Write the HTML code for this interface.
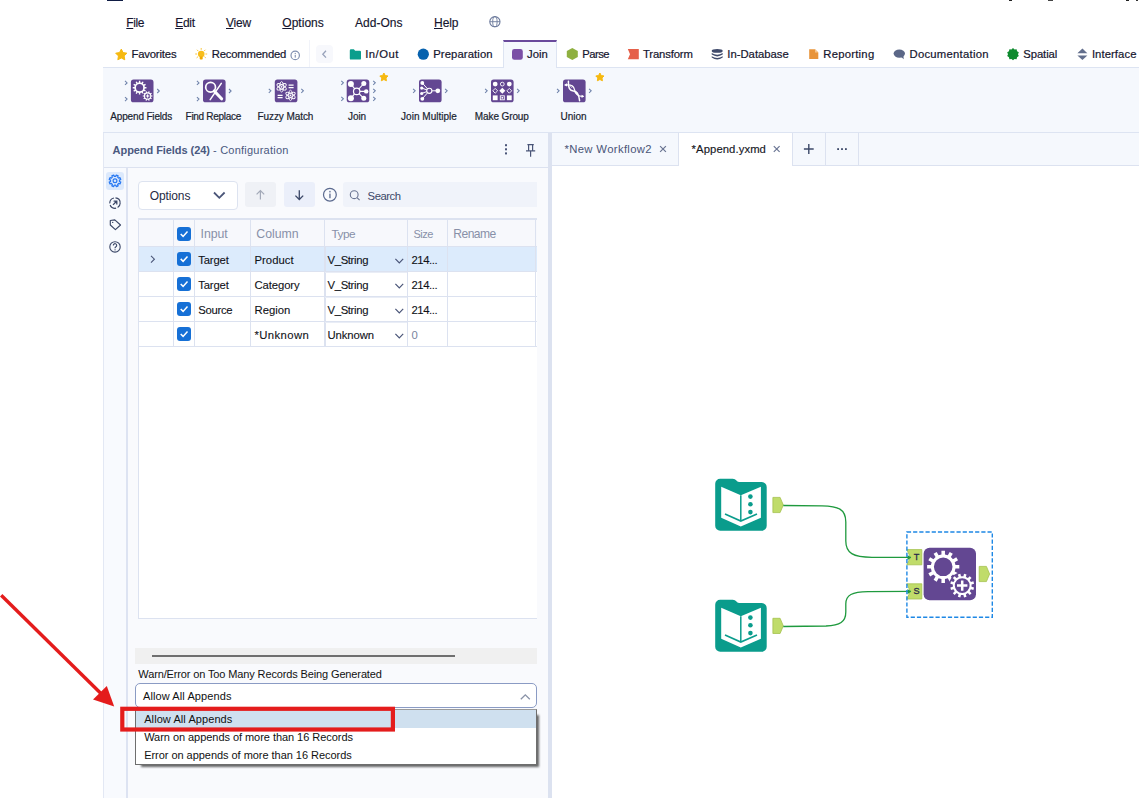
<!DOCTYPE html>
<html><head><meta charset="utf-8"><title>Append Fields</title>
<style>
html,body{margin:0;padding:0;background:#fff;}
body{width:1139px;height:798px;overflow:hidden;position:relative;font-family:"Liberation Sans",sans-serif;color:#1f2a44;}
.abs{position:absolute;}
.t{position:absolute;white-space:nowrap;line-height:1;}
.t u{text-decoration:underline;text-underline-offset:1px;text-decoration-thickness:1px;}
svg{position:absolute;left:0;top:0;overflow:visible;}
</style></head>
<body>
<div class="abs" style="left:107px;top:0;width:16px;height:1px;background:#0f1c44"></div>
<div class="abs" style="left:1009px;top:0;width:3px;height:1px;background:#222"></div>
<div class="abs" style="left:1048px;top:0;width:5px;height:1px;background:#444"></div>
<div class="abs" style="left:1126px;top:0;width:3px;height:1px;background:#222"></div>
<div class="abs" style="left:1136px;top:0;width:2px;height:1px;background:#333"></div>
<div class="t" style="left:126.3px;top:17px;font-size:12px;letter-spacing:-0.365px;color:#15152e;-webkit-text-stroke:0.15px #15152e;"><u>F</u>ile</div><div class="t" style="left:175.2px;top:17px;font-size:12px;letter-spacing:-0.276px;color:#15152e;-webkit-text-stroke:0.15px #15152e;"><u>E</u>dit</div><div class="t" style="left:226px;top:17px;font-size:12px;letter-spacing:-0.228px;color:#15152e;-webkit-text-stroke:0.15px #15152e;"><u>V</u>iew</div><div class="t" style="left:282.3px;top:17px;font-size:12px;letter-spacing:0.018px;color:#15152e;-webkit-text-stroke:0.15px #15152e;"><u>O</u>ptions</div><div class="t" style="left:355px;top:17px;font-size:12px;letter-spacing:0.020px;color:#15152e;-webkit-text-stroke:0.15px #15152e;">Add-Ons</div><div class="t" style="left:434px;top:17px;font-size:12px;letter-spacing:-0.047px;color:#15152e;-webkit-text-stroke:0.15px #15152e;"><u>H</u>elp</div>
<div class="abs" style="left:103px;top:67px;width:1036px;height:1px;background:#dde4f2"></div>
<div class="abs" style="left:103px;top:68px;width:1036px;height:64px;background:#f5f8fd"></div>
<div class="abs" style="left:103px;top:132px;width:1036px;height:1px;background:#dde4f2"></div>
<div class="abs" style="left:503px;top:40px;width:54px;height:28px;background:#f5f8fd;border-top:2px solid #6a4a9c;border-left:1px solid #dde4f2;border-right:1px solid #dde4f2;box-sizing:border-box"></div>
<div class="abs" style="left:309px;top:40px;width:1px;height:27px;background:#f1f3f9"></div>
<div class="abs" style="left:316px;top:45px;width:17px;height:18px;background:#f7f8fc;border-radius:4px"></div>
<div class="t" style="left:131.4px;top:49px;font-size:11.3px;letter-spacing:-0.163px;color:#15152e;-webkit-text-stroke:0.2px #15152e;">Favorites</div><div class="t" style="left:211.8px;top:49px;font-size:11.3px;letter-spacing:-0.210px;color:#15152e;-webkit-text-stroke:0.2px #15152e;">Recommended</div><div class="t" style="left:365.2px;top:49px;font-size:11.3px;letter-spacing:0.486px;color:#15152e;-webkit-text-stroke:0.2px #15152e;">In/Out</div><div class="t" style="left:433.2px;top:49px;font-size:11.3px;letter-spacing:0.099px;color:#15152e;-webkit-text-stroke:0.2px #15152e;">Preparation</div><div class="t" style="left:527px;top:49px;font-size:11.3px;letter-spacing:0.016px;color:#15152e;-webkit-text-stroke:0.2px #15152e;">Join</div><div class="t" style="left:582.3px;top:49px;font-size:11.27px;letter-spacing:-0.550px;color:#15152e;-webkit-text-stroke:0.2px #15152e;">Parse</div><div class="t" style="left:643px;top:49px;font-size:11.3px;letter-spacing:-0.151px;color:#15152e;-webkit-text-stroke:0.2px #15152e;">Transform</div><div class="t" style="left:727.3px;top:49px;font-size:11.3px;letter-spacing:-0.004px;color:#15152e;-webkit-text-stroke:0.2px #15152e;">In-Database</div><div class="t" style="left:823.3px;top:49px;font-size:11.3px;letter-spacing:0.235px;color:#15152e;-webkit-text-stroke:0.2px #15152e;">Reporting</div><div class="t" style="left:909.5px;top:49px;font-size:11.3px;letter-spacing:0.247px;color:#15152e;-webkit-text-stroke:0.2px #15152e;">Documentation</div><div class="t" style="left:1023.2px;top:49px;font-size:11.3px;letter-spacing:-0.064px;color:#15152e;-webkit-text-stroke:0.2px #15152e;">Spatial</div><div class="t" style="left:1091.9px;top:49px;font-size:11.3px;letter-spacing:0.070px;color:#15152e;-webkit-text-stroke:0.2px #15152e;">Interface</div><div class="t" style="left:110.3px;top:112px;font-size:10px;letter-spacing:-0.164px;color:#1a1f30;-webkit-text-stroke:0.2px #1a1f30;">Append Fields</div><div class="t" style="left:185.6px;top:112px;font-size:10px;letter-spacing:-0.293px;color:#1a1f30;-webkit-text-stroke:0.2px #1a1f30;">Find Replace</div><div class="t" style="left:257.5px;top:112px;font-size:10px;letter-spacing:-0.081px;color:#1a1f30;-webkit-text-stroke:0.2px #1a1f30;">Fuzzy Match</div><div class="t" style="left:348.1px;top:112px;font-size:10px;letter-spacing:-0.115px;color:#1a1f30;-webkit-text-stroke:0.2px #1a1f30;">Join</div><div class="t" style="left:401.1px;top:112px;font-size:10px;letter-spacing:0.016px;color:#1a1f30;-webkit-text-stroke:0.2px #1a1f30;">Join Multiple</div><div class="t" style="left:474.8px;top:112px;font-size:10px;letter-spacing:-0.103px;color:#1a1f30;-webkit-text-stroke:0.2px #1a1f30;">Make Group</div><div class="t" style="left:560.4px;top:112px;font-size:10px;letter-spacing:0.032px;color:#1a1f30;-webkit-text-stroke:0.2px #1a1f30;">Union</div><svg width="1139" height="798" viewBox="0 0 1139 798"><g fill="none" stroke="#6c7a9c" stroke-width="1.1"><circle cx="494.9" cy="21.7" r="5.1"/><ellipse cx="494.9" cy="21.7" rx="2.2" ry="5.1" stroke-width="0.9"/><path d="M489.8 21.7h10.2" stroke-width="0.9"/></g>
<path d="M121.30 49.10 L123.06 52.57 L126.91 53.18 L124.15 55.93 L124.77 59.77 L121.30 58.00 L117.83 59.77 L118.45 55.93 L115.69 53.18 L119.54 52.57 Z" fill="#f6b910" stroke="#f6b910" stroke-width="1" stroke-linejoin="round"/>
<g><circle cx="201.2" cy="54" r="3.3" fill="#f7bd1a"/><rect x="199.7" y="56.6" width="3" height="3" rx="0.8" fill="#f0a800"/><g stroke="#f7c53a" stroke-width="1" stroke-linecap="round"><path d="M196.60 54.00 L195.60 54.00"/><path d="M197.95 50.75 L197.24 50.04"/><path d="M201.20 49.40 L201.20 48.40"/><path d="M204.45 50.75 L205.16 50.04"/><path d="M205.80 54.00 L206.80 54.00"/><path d="M197.68 56.96 L196.91 57.60"/><path d="M204.72 56.96 L205.49 57.60"/></g></g>
<g><circle cx="295.2" cy="55.4" r="4.2" fill="none" stroke="#8190b0" stroke-width="1.2"/><rect x="294.7" y="54.8" width="1.1" height="2.8" fill="#8190b0"/><rect x="294.7" y="52.9" width="1.1" height="1.1" fill="#8190b0"/></g>
<path d="M326 50.8 l-3.2 3.4 l3.2 3.4" fill="none" stroke="#98a2ba" stroke-width="1.3"/>
<path d="M349.8 50.4 a1.2 1.2 0 0 1 1.2 -1.2 h2.8 l1.4 1.6 h4.6 a1.2 1.2 0 0 1 1.2 1.2 v6.4 a1.2 1.2 0 0 1 -1.2 1.2 h-8.8 a1.2 1.2 0 0 1 -1.2 -1.2 Z" fill="#0a9e8c"/>
<circle cx="423.3" cy="54.2" r="5.6" fill="#0762ae"/>
<rect x="512" y="49" width="10.8" height="10.8" rx="2.4" fill="#7b4fa6"/>
<path d="M572.3 48.1 L577.8 51.1 V57.1 L572.3 60.1 L566.8 57.1 V51.1 Z" fill="#8fb040"/>
<path d="M627.8 49 H638.8 V59.3 H627.8 L630 54.15 Z" fill="#e5604a"/>
<g fill="#3f4a6b"><ellipse cx="717.2" cy="50.9" rx="5.5" ry="1.9"/><path d="M711.7 53 q5.5 3.4 11 0 v1.6 q-5.5 3.6 -11 0 Z"/><path d="M711.7 56.2 q5.5 3.4 11 0 v1.3 q-5.5 3.8 -11 0 Z"/></g>
<path d="M809.2 49.2 H815 L818.3 52.5 V59 H809.2 Z" fill="#e8943a"/><path d="M815 49.2 V52.5 H818.3 Z" fill="#f6c58d"/>
<g fill="#5b6787"><ellipse cx="899.3" cy="53.6" rx="5.7" ry="4.1"/><path d="M900.5 56.5 L903.8 59.2 L903.2 55 Z"/></g>
<path d="M1013.00 48.10 L1014.55 49.44 L1016.59 49.26 L1017.05 51.26 L1018.80 52.31 L1018.00 54.20 L1018.80 56.09 L1017.05 57.14 L1016.59 59.14 L1014.55 58.96 L1013.00 60.30 L1011.45 58.96 L1009.41 59.14 L1008.95 57.14 L1007.20 56.09 L1008.00 54.20 L1007.20 52.31 L1008.95 51.26 L1009.41 49.26 L1011.45 49.44 Z" fill="#0e8a2e"/>
<g fill="#626e8c"><path d="M1082.4 48.6 L1087.4 53.2 H1077.4 Z"/><path d="M1082.4 60 L1087.4 55.4 H1077.4 Z"/></g>
<rect x="130.9" y="79.6" width="22.6" height="22.7" rx="2.6" fill="#634792"/>
<path fill-rule="evenodd" fill="#fff" d="M144.85 87.01 L146.46 86.98 L146.46 88.42 L144.85 88.39 L144.50 89.73 L145.90 90.51 L145.18 91.76 L143.80 90.93 L142.83 91.90 L143.66 93.28 L142.41 94.00 L141.63 92.60 L140.29 92.95 L140.32 94.56 L138.88 94.56 L138.91 92.95 L137.57 92.60 L136.79 94.00 L135.54 93.28 L136.37 91.90 L135.40 90.93 L134.02 91.76 L133.30 90.51 L134.70 89.73 L134.35 88.39 L132.74 88.42 L132.74 86.98 L134.35 87.01 L134.70 85.67 L133.30 84.89 L134.02 83.64 L135.40 84.47 L136.37 83.50 L135.54 82.12 L136.79 81.40 L137.57 82.80 L138.91 82.45 L138.88 80.84 L140.32 80.84 L140.29 82.45 L141.63 82.80 L142.41 81.40 L143.66 82.12 L142.83 83.50 L143.80 84.47 L145.18 83.64 L145.90 84.89 L144.50 85.67 Z M136.00 87.70 a3.60 3.60 0 1 0 7.20 0 a3.60 3.60 0 1 0 -7.20 0 Z"/>
<circle cx="147.6" cy="96" r="5.6" fill="#634792"/>
<path fill-rule="evenodd" fill="#fff" d="M151.35 95.41 L152.46 95.39 L152.46 96.61 L151.35 96.59 L150.99 97.73 L151.89 98.36 L151.17 99.35 L150.29 98.69 L149.33 99.39 L149.69 100.43 L148.52 100.81 L148.19 99.75 L147.01 99.75 L146.68 100.81 L145.51 100.43 L145.87 99.39 L144.91 98.69 L144.03 99.35 L143.31 98.36 L144.21 97.73 L143.85 96.59 L142.74 96.61 L142.74 95.39 L143.85 95.41 L144.21 94.27 L143.31 93.64 L144.03 92.65 L144.91 93.31 L145.87 92.61 L145.51 91.57 L146.68 91.19 L147.01 92.25 L148.19 92.25 L148.52 91.19 L149.69 91.57 L149.33 92.61 L150.29 93.31 L151.17 92.65 L151.89 93.64 L150.99 94.27 Z M145.00 96.00 a2.60 2.60 0 1 0 5.20 0 a2.60 2.60 0 1 0 -5.20 0 Z"/>
<circle cx="147.6" cy="96" r="1" fill="#fff"/><path d="M147.6 93.9 v4.2 M145.5 96 h4.2" stroke="#fff" stroke-width="0.7"/>
<path d="M125.00 80.90 l2.10 2.00 l-2.10 2.00" fill="none" stroke="#6f83ab" stroke-width="1.05"/><path d="M125.00 97.10 l2.10 2.00 l-2.10 2.00" fill="none" stroke="#6f83ab" stroke-width="1.05"/><path d="M157.20 89.00 l2.10 2.00 l-2.10 2.00" fill="none" stroke="#6f83ab" stroke-width="1.05"/>
<rect x="203.0" y="79.6" width="22.6" height="22.7" rx="2.6" fill="#634792"/>
<circle cx="210.6" cy="87.3" r="4.9" fill="none" stroke="#fff" stroke-width="1.7"/>
<path d="M214.2 91 L221.6 98.8" stroke="#fff" stroke-width="3.1" stroke-linecap="round"/>
<path d="M221.3 83.4 L210.2 99.6" stroke="#fff" stroke-width="1.5" stroke-linecap="round"/>
<path d="M196.90 80.90 l2.10 2.00 l-2.10 2.00" fill="none" stroke="#6f83ab" stroke-width="1.05"/><path d="M196.90 97.10 l2.10 2.00 l-2.10 2.00" fill="none" stroke="#6f83ab" stroke-width="1.05"/><path d="M229.00 89.00 l2.10 2.00 l-2.10 2.00" fill="none" stroke="#6f83ab" stroke-width="1.05"/>
<rect x="274.8" y="79.6" width="22.6" height="22.7" rx="2.6" fill="#634792"/>
<g fill="none" stroke="#fff" stroke-width="0.9"><ellipse cx="281.6" cy="86.8" rx="5.2" ry="2.0" transform="rotate(90 281.6 86.8)"/><ellipse cx="281.6" cy="86.8" rx="5.2" ry="2.0" transform="rotate(30 281.6 86.8)"/><ellipse cx="281.6" cy="86.8" rx="5.2" ry="2.0" transform="rotate(150 281.6 86.8)"/></g><circle cx="281.6" cy="86.8" r="0.9" fill="#fff"/><g fill="none" stroke="#fff" stroke-width="0.9"><ellipse cx="290.5" cy="95.4" rx="5.2" ry="2.0" transform="rotate(90 290.5 95.4)"/><ellipse cx="290.5" cy="95.4" rx="5.2" ry="2.0" transform="rotate(30 290.5 95.4)"/><ellipse cx="290.5" cy="95.4" rx="5.2" ry="2.0" transform="rotate(150 290.5 95.4)"/></g><circle cx="290.5" cy="95.4" r="0.9" fill="#fff"/>
<path d="M288.6 85.2 h5 M288.6 87.6 h5 M277.6 95.3 h5 M277.6 97.7 h5" stroke="#fff" stroke-width="1.2"/>
<path d="M268.80 88.80 l2.10 2.00 l-2.10 2.00" fill="none" stroke="#6f83ab" stroke-width="1.05"/><path d="M301.30 88.80 l2.10 2.00 l-2.10 2.00" fill="none" stroke="#6f83ab" stroke-width="1.05"/>
<rect x="346.7" y="79.6" width="22.6" height="22.7" rx="2.6" fill="#634792"/>
<g fill="none" stroke="#fff" stroke-width="1.1"><path d="M350.8 83.8 L356.7 91.4 L363.8 83.5 M350.8 98.3 L356.7 91.4 L363.8 98.3 M356.7 91.4 H366"/></g>
<circle cx="356.7" cy="91.4" r="3.2" fill="#634792" stroke="#fff" stroke-width="1.2"/>
<g fill="#fff"><circle cx="350.9" cy="83.9" r="3"/><circle cx="363.8" cy="83.6" r="2.5"/><circle cx="350.9" cy="98.2" r="3"/><circle cx="363.8" cy="98.2" r="2.5"/><circle cx="366.2" cy="91.4" r="2.2"/></g>
<path d="M341.30 80.80 l2.10 2.00 l-2.10 2.00" fill="none" stroke="#6f83ab" stroke-width="1.05"/><path d="M341.30 96.80 l2.10 2.00 l-2.10 2.00" fill="none" stroke="#6f83ab" stroke-width="1.05"/><path d="M373.20 80.80 l2.10 2.00 l-2.10 2.00" fill="none" stroke="#6f83ab" stroke-width="1.05"/><path d="M373.20 88.80 l2.10 2.00 l-2.10 2.00" fill="none" stroke="#6f83ab" stroke-width="1.05"/><path d="M373.20 96.80 l2.10 2.00 l-2.10 2.00" fill="none" stroke="#6f83ab" stroke-width="1.05"/>
<path d="M383.90 73.00 L385.19 75.52 L387.99 75.97 L385.99 77.98 L386.43 80.78 L383.90 79.50 L381.37 80.78 L381.81 77.98 L379.81 75.97 L382.61 75.52 Z" fill="#f6b910" stroke="#f6b910" stroke-width="1" stroke-linejoin="round"/>
<rect x="419.0" y="79.6" width="22.6" height="22.7" rx="2.6" fill="#634792"/>
<g fill="none" stroke="#fff" stroke-width="1"><path d="M422.2 82.9 L429.3 90.8 M421.6 88 L429.3 90.8 M421.6 93.4 L429.3 90.8 M422.2 98.9 L429.3 90.8 H437.5"/></g>
<circle cx="429.3" cy="90.8" r="2.6" fill="#634792" stroke="#fff" stroke-width="1.1"/>
<g fill="#fff"><circle cx="437.8" cy="90.8" r="2.4"/><circle cx="422.3" cy="83" r="1.9"/><circle cx="421.7" cy="88.1" r="1.6"/><circle cx="421.7" cy="93.5" r="1.6"/><circle cx="422.3" cy="98.8" r="1.9"/></g>
<path d="M413.10 88.80 l2.10 2.00 l-2.10 2.00" fill="none" stroke="#6f83ab" stroke-width="1.05"/><path d="M445.10 88.80 l2.10 2.00 l-2.10 2.00" fill="none" stroke="#6f83ab" stroke-width="1.05"/>
<rect x="491.0" y="79.6" width="22.6" height="22.7" rx="2.6" fill="#634792"/>
<circle cx="495.2" cy="84.1" r="2.4" fill="#fff"/><circle cx="502.3" cy="84.1" r="1.9" fill="none" stroke="#fff" stroke-width="0.9"/><circle cx="509.3" cy="84.1" r="2.4" fill="#fff"/><path d="M495.2 88.4 l2.4 2.4 l-2.4 2.4 l-2.4 -2.4 Z" fill="none" stroke="#fff" stroke-width="0.9"/><path d="M502.3 87.8 l3.0 3.0 l-3.0 3.0 l-3.0 -3.0 Z" fill="#fff"/><path d="M509.3 88.4 l2.4 2.4 l-2.4 2.4 l-2.4 -2.4 Z" fill="none" stroke="#fff" stroke-width="0.9"/><rect x="492.8" y="95.4" width="4.8" height="4.8" fill="#fff"/><rect x="500.3" y="95.8" width="4" height="4" fill="none" stroke="#fff" stroke-width="0.9"/><rect x="501.5" y="97.0" width="1.6" height="1.6" fill="#fff"/><rect x="506.9" y="95.4" width="4.8" height="4.8" fill="#fff"/>
<path d="M485.10 88.80 l2.10 2.00 l-2.10 2.00" fill="none" stroke="#6f83ab" stroke-width="1.05"/><path d="M517.10 88.80 l2.10 2.00 l-2.10 2.00" fill="none" stroke="#6f83ab" stroke-width="1.05"/>
<rect x="563.0" y="79.6" width="22.6" height="22.7" rx="2.6" fill="#634792"/>
<g fill="none" stroke="#fff" stroke-linecap="round"><path d="M568.4 81.3 C568.1 86 568.4 90.6 573.4 91.1 C577.6 91.5 579 95 579.6 100.7" stroke-width="1.5"/><path d="M565.2 85 C569.5 84.4 573.6 84.6 574.5 89.6 C575.3 94 578 96.5 583 96.4" stroke-width="1.2"/></g>
<path d="M564.2 85 L567 83.2 V86.6 Z M584.2 96.3 L581.6 94.8 V98 Z" fill="#fff"/>
<g stroke="#fff" stroke-width="0.7" fill="none"><path d="M570.3 86.2 l1.6 1.6 M571.6 85.2 l1.8 1.8 M575.2 92.6 l1.7 1.7 M576.4 91.8 l1.6 1.6"/></g>
<path d="M557.00 88.80 l2.10 2.00 l-2.10 2.00" fill="none" stroke="#6f83ab" stroke-width="1.05"/><path d="M589.10 88.80 l2.10 2.00 l-2.10 2.00" fill="none" stroke="#6f83ab" stroke-width="1.05"/>
<path d="M599.90 73.00 L601.19 75.52 L603.99 75.97 L601.99 77.98 L602.43 80.78 L599.90 79.50 L597.37 80.78 L597.81 77.98 L595.81 75.97 L598.61 75.52 Z" fill="#f6b910" stroke="#f6b910" stroke-width="1" stroke-linejoin="round"/></svg><div class="abs" style="left:103px;top:133px;width:445px;height:34px;background:#f5f8fd"></div>
<div class="abs" style="left:103px;top:167px;width:445px;height:1px;background:#dce2f0"></div>
<div class="abs" style="left:103px;top:168px;width:445px;height:630px;background:#f9fafd"></div>
<div class="abs" style="left:103px;top:133px;width:1px;height:665px;background:#e3e8f4"></div>
<div class="abs" style="left:104px;top:168px;width:22px;height:630px;background:#f8fafe"></div>
<div class="abs" style="left:126px;top:168px;width:2px;height:630px;background:#dde3f2"></div>
<div class="abs" style="left:548px;top:133px;width:4px;height:665px;background:#dce2f0"></div>
<div class="abs" style="left:106px;top:172px;width:18px;height:18px;background:#dce9fc;border-radius:3px"></div>
<div class="abs" style="left:138px;top:181px;width:100px;height:29px;box-sizing:border-box;background:#fff;border:1px solid #dde3f0;border-radius:4px"></div>
<div class="abs" style="left:245px;top:182px;width:31px;height:25px;background:#eff1f6;border-radius:3px"></div>
<div class="abs" style="left:284px;top:182px;width:31px;height:25px;background:#ebeffa;border-radius:3px"></div>
<div class="abs" style="left:343px;top:182px;width:194px;height:25px;background:#f0f3fa;border-radius:3px 0 0 3px"></div>
<div class="abs" style="left:138px;top:218px;width:399px;height:401px;overflow:hidden;box-sizing:border-box;border:1px solid #dce2f0;border-right:none;border-top:2px solid #dce2f0"><div class="abs" style="left:-1px;top:-2px;width:399px;height:400px"><div class="abs" style="left:0;top:0;width:399px;height:400px;background:#fff"></div><div class="abs" style="left:0;top:0;width:399px;height:28px;background:#f7f8fc"></div><div class="abs" style="left:0;top:28px;width:399px;height:25px;background:#dcebfc"></div><div class="abs" style="left:0;top:28px;width:399px;height:1px;background:#dce2f0"></div><div class="abs" style="left:0;top:53px;width:399px;height:1px;background:#dce2f0"></div><div class="abs" style="left:0;top:78px;width:399px;height:1px;background:#dce2f0"></div><div class="abs" style="left:0;top:103px;width:399px;height:1px;background:#dce2f0"></div><div class="abs" style="left:0;top:128px;width:399px;height:1px;background:#dce2f0"></div><div class="abs" style="left:35px;top:0;width:1px;height:129px;background:#dce2f0"></div><div class="abs" style="left:56px;top:0;width:1px;height:129px;background:#dce2f0"></div><div class="abs" style="left:112px;top:0;width:1px;height:129px;background:#dce2f0"></div><div class="abs" style="left:186px;top:0;width:1px;height:129px;background:#dce2f0"></div><div class="abs" style="left:269px;top:0;width:1px;height:129px;background:#dce2f0"></div><div class="abs" style="left:309px;top:0;width:1px;height:129px;background:#dce2f0"></div><div class="abs" style="left:397px;top:0;width:1px;height:129px;background:#dce2f0"></div><div class="abs" style="left:187px;top:28px;width:1px;height:101px;background:#dce2f0"></div><div class="abs" style="left:187px;top:54px;width:82px;height:1px;background:#e9edf6"></div><div class="abs" style="left:187px;top:79px;width:82px;height:1px;background:#e9edf6"></div><div class="abs" style="left:187px;top:104px;width:82px;height:1px;background:#e9edf6"></div><div class="abs" style="left:39px;top:9px;width:14px;height:14px;background:#1670d6;border-radius:3px"></div><div class="abs" style="left:39px;top:33.5px;width:14px;height:14px;background:#1670d6;border-radius:3px"></div><div class="abs" style="left:39px;top:58.5px;width:14px;height:14px;background:#1670d6;border-radius:3px"></div><div class="abs" style="left:39px;top:83.5px;width:14px;height:14px;background:#1670d6;border-radius:3px"></div><div class="abs" style="left:39px;top:108.5px;width:14px;height:14px;background:#1670d6;border-radius:3px"></div></div></div>
<div class="abs" style="left:135px;top:648px;width:402px;height:16px;background:#f0f0f0"></div>
<div class="abs" style="left:152px;top:655px;width:303px;height:2px;background:#6f6f6f"></div><div class="t" style="left:112.6px;top:145px;font-size:11px;font-weight:bold;letter-spacing:-0.061px;color:#4a5980;">Append Fields (24)</div><div class="t" style="left:213px;top:145px;font-size:11px;letter-spacing:0.230px;color:#4a5980;">- Configuration</div><div class="t" style="left:149.7px;top:190px;font-size:12px;letter-spacing:-0.108px;color:#1f2a44;">Options</div><div class="t" style="left:367.6px;top:191px;font-size:11.3px;letter-spacing:-0.466px;color:#3c4868;">Search</div><div class="t" style="left:200.5px;top:228px;font-size:12.3px;letter-spacing:-0.032px;color:#8890a8;">Input</div><div class="t" style="left:256.3px;top:228px;font-size:12.3px;letter-spacing:0.004px;color:#8890a8;">Column</div><div class="t" style="left:331.6px;top:229px;font-size:11.81px;letter-spacing:-0.550px;color:#8890a8;">Type</div><div class="t" style="left:413.5px;top:229px;font-size:11px;letter-spacing:-0.550px;color:#8890a8;">Size</div><div class="t" style="left:453.3px;top:228px;font-size:12.09px;letter-spacing:-0.550px;color:#8890a8;">Rename</div><div class="t" style="left:198.2px;top:255px;font-size:11.3px;letter-spacing:-0.151px;color:#101218;-webkit-text-stroke:0.1px #101218;">Target</div><div class="t" style="left:254.5px;top:255px;font-size:11.3px;letter-spacing:0.023px;color:#101218;-webkit-text-stroke:0.1px #101218;">Product</div><div class="t" style="left:327.5px;top:255px;font-size:11.3px;letter-spacing:-0.343px;color:#101218;-webkit-text-stroke:0.1px #101218;">V_String</div><div class="t" style="left:411.5px;top:255px;font-size:11.3px;letter-spacing:-0.428px;color:#101218;-webkit-text-stroke:0.1px #101218;">214...</div><div class="t" style="left:198.2px;top:280px;font-size:11.3px;letter-spacing:-0.151px;color:#101218;-webkit-text-stroke:0.1px #101218;">Target</div><div class="t" style="left:254.5px;top:280px;font-size:11.3px;letter-spacing:-0.093px;color:#101218;-webkit-text-stroke:0.1px #101218;">Category</div><div class="t" style="left:327.5px;top:280px;font-size:11.3px;letter-spacing:-0.343px;color:#101218;-webkit-text-stroke:0.1px #101218;">V_String</div><div class="t" style="left:411.5px;top:280px;font-size:11.3px;letter-spacing:-0.428px;color:#101218;-webkit-text-stroke:0.1px #101218;">214...</div><div class="t" style="left:198.2px;top:305px;font-size:11.3px;letter-spacing:-0.283px;color:#101218;-webkit-text-stroke:0.1px #101218;">Source</div><div class="t" style="left:254.5px;top:305px;font-size:11.3px;letter-spacing:0.015px;color:#101218;-webkit-text-stroke:0.1px #101218;">Region</div><div class="t" style="left:327.5px;top:305px;font-size:11.3px;letter-spacing:-0.343px;color:#101218;-webkit-text-stroke:0.1px #101218;">V_String</div><div class="t" style="left:411.5px;top:305px;font-size:11.3px;letter-spacing:-0.428px;color:#101218;-webkit-text-stroke:0.1px #101218;">214...</div><div class="t" style="left:254.5px;top:330px;font-size:11.3px;letter-spacing:0.400px;color:#101218;-webkit-text-stroke:0.1px #101218;">*Unknown</div><div class="t" style="left:327.5px;top:330px;font-size:11.3px;letter-spacing:-0.087px;color:#101218;-webkit-text-stroke:0.1px #101218;">Unknown</div><div class="t" style="left:411.5px;top:330px;font-size:11.3px;letter-spacing:-0.297px;color:#7a84a0;">0</div><svg width="1139" height="798" viewBox="0 0 1139 798"><g fill="#4a5578"><rect x="505" y="144.2" width="2" height="2"/><rect x="505" y="148.3" width="2" height="2"/><rect x="505" y="152.4" width="2" height="2"/></g>
<g fill="none" stroke="#4a5578" stroke-width="1.2"><path d="M527.4 144.6 H533.8 M528.6 144.6 V150.6 M532.6 144.6 V150.6 M526 150.8 H535.2 M530.6 150.8 V156.8"/></g>
<path d="M119.44 181.50 L120.75 182.13 L120.01 183.92 L118.64 183.45 L117.65 184.44 L118.12 185.81 L116.33 186.55 L115.70 185.24 L114.30 185.24 L113.67 186.55 L111.88 185.81 L112.35 184.44 L111.36 183.45 L109.99 183.92 L109.25 182.13 L110.56 181.50 L110.56 180.10 L109.25 179.47 L109.99 177.68 L111.36 178.15 L112.35 177.16 L111.88 175.79 L113.67 175.05 L114.30 176.36 L115.70 176.36 L116.33 175.05 L118.12 175.79 L117.65 177.16 L118.64 178.15 L120.01 177.68 L120.75 179.47 L119.44 180.10 Z" fill="none" stroke="#2979f2" stroke-width="1.25" stroke-linejoin="round"/>
<circle cx="115" cy="180.8" r="1.9" fill="none" stroke="#2979f2" stroke-width="1.2"/>
<g fill="none" stroke="#3c4868" stroke-width="1.15"><circle cx="115" cy="203.1" r="5.2" stroke-dasharray="7.2 1.6" stroke-dashoffset="2"/><path d="M113 204.9 L116.6 201.3 M113.6 201.2 H116.8 V204.4" stroke-width="1.3"/></g>
<g fill="none" stroke="#3c4868" stroke-width="1.15" stroke-linejoin="round"><path d="M110.3 220.5 L114.8 219.9 L120.5 225 L115.4 229.7 L110.3 225 Z"/></g><circle cx="112.7" cy="222.4" r="0.7" fill="#3c4868"/>
<circle cx="115" cy="246.9" r="5.2" fill="none" stroke="#3c4868" stroke-width="1.1"/>
<path d="M113.3 245.4 a1.7 1.7 0 1 1 2.6 1.4 q-0.9 0.5 -0.9 1.5" fill="none" stroke="#3c4868" stroke-width="1.1"/><rect x="114.5" y="249.3" width="1.1" height="1.1" fill="#3c4868"/>
<path d="M214 192.5 L219.3 197.8 L224.6 192.5" fill="none" stroke="#4a5578" stroke-width="1.8"/>
<g fill="none" stroke="#a3a9b8" stroke-width="1.2"><path d="M260.4 199.6 V190.6 M256.6 194.4 L260.4 190.6 L264.2 194.4"/></g>
<g fill="none" stroke="#3c4868" stroke-width="1.3"><path d="M299.3 190.2 V199.4 M295.4 195.6 L299.3 199.5 L303.2 195.6"/></g>
<circle cx="329.9" cy="194.7" r="6.4" fill="none" stroke="#5b6a8f" stroke-width="1.2"/><rect x="329.3" y="193.6" width="1.3" height="4.6" fill="#5b6a8f"/><rect x="329.3" y="190.9" width="1.3" height="1.5" fill="#5b6a8f"/>
<g fill="none" stroke="#6a7593" stroke-width="1.1"><circle cx="354.2" cy="194.7" r="3.9"/><path d="M357 197.6 L359.6 200.2"/></g>
<path d="M180.7 234.0 l2.4 2.4 l4.4 -4.8" fill="none" stroke="#fff" stroke-width="1.5"/>
<path d="M180.7 258.9 l2.4 2.4 l4.4 -4.8" fill="none" stroke="#fff" stroke-width="1.5"/>
<path d="M180.7 284.0 l2.4 2.4 l4.4 -4.8" fill="none" stroke="#fff" stroke-width="1.5"/>
<path d="M180.7 309.0 l2.4 2.4 l4.4 -4.8" fill="none" stroke="#fff" stroke-width="1.5"/>
<path d="M180.7 334.0 l2.4 2.4 l4.4 -4.8" fill="none" stroke="#fff" stroke-width="1.5"/>
<path d="M151 255.8 L154.4 259.2 L151 262.6" fill="none" stroke="#4a5578" stroke-width="1.1"/>
<path d="M395.4 258.9 l3.9 3.9 l3.9 -3.9" fill="none" stroke="#4a5578" stroke-width="1.2"/>
<path d="M395.4 283.9 l3.9 3.9 l3.9 -3.9" fill="none" stroke="#4a5578" stroke-width="1.2"/>
<path d="M395.4 308.9 l3.9 3.9 l3.9 -3.9" fill="none" stroke="#4a5578" stroke-width="1.2"/>
<path d="M395.4 333.9 l3.9 3.9 l3.9 -3.9" fill="none" stroke="#4a5578" stroke-width="1.2"/></svg><div class="abs" style="left:135px;top:683px;width:402px;height:25px;box-sizing:border-box;background:#fff;border:1px solid #8a9bc4;border-radius:5px"></div>
<div class="abs" style="left:141px;top:715px;width:398px;height:52px;background:#4a4a4a;filter:blur(1.1px);opacity:0.85"></div>
<div class="abs" style="left:135px;top:709px;width:402px;height:56px;box-sizing:border-box;background:#fff;border:1px solid #6e6e6e;border-top-color:#9a9a9a"></div>
<div class="abs" style="left:136px;top:710px;width:400px;height:18px;background:#cfe0ef"></div><div class="t" style="left:138.3px;top:669px;font-size:11px;letter-spacing:-0.130px;color:#111;">Warn/Error on Too Many Records Being Generated</div><div class="t" style="left:143px;top:691px;font-size:11px;letter-spacing:0.097px;color:#111;">Allow All Appends</div><div class="t" style="left:144.2px;top:714px;font-size:11px;letter-spacing:0.080px;color:#111;">Allow All Appends</div><div class="t" style="left:144.2px;top:732px;font-size:11px;letter-spacing:-0.047px;color:#111;">Warn on appends of more than 16 Records</div><div class="t" style="left:144.2px;top:750px;font-size:11px;letter-spacing:-0.041px;color:#111;">Error on appends of more than 16 Records</div><svg width="1139" height="798" viewBox="0 0 1139 798"><path d="M520.8 699.3 L525.3 694.8 L529.8 699.3" fill="none" stroke="#8a93a8" stroke-width="1.3"/></svg><div class="abs" style="left:552px;top:133px;width:587px;height:32px;background:#f5f8fd"></div>
<div class="abs" style="left:552px;top:165px;width:587px;height:1px;background:#dce2f0"></div>
<div class="abs" style="left:679px;top:133px;width:113px;height:33px;background:#fff"></div>
<div class="abs" style="left:678px;top:133px;width:1px;height:32px;background:#dce2f0"></div>
<div class="abs" style="left:792px;top:133px;width:1px;height:32px;background:#dce2f0"></div>
<div class="abs" style="left:825px;top:133px;width:1px;height:32px;background:#dce2f0"></div>
<div class="abs" style="left:858px;top:133px;width:1px;height:32px;background:#dce2f0"></div><div class="t" style="left:564.5px;top:144px;font-size:11.3px;letter-spacing:0.345px;color:#4a5578;">*New Workflow2</div><div class="t" style="left:691.6px;top:144px;font-size:11.3px;letter-spacing:0.076px;color:#16181f;-webkit-text-stroke:0.15px #16181f;">*Append.yxmd</div><svg width="1139" height="798" viewBox="0 0 1139 798"><path d="M660.1 146.1 l5.8 5.8 M665.9 146.1 l-5.8 5.8" fill="none" stroke="#6a7593" stroke-width="1.2"/>
<path d="M773.8 146.1 l5.8 5.8 M779.6 146.1 l-5.8 5.8" fill="none" stroke="#6a7593" stroke-width="1.2"/>
<path d="M803.9 149 H813.7 M808.8 144.1 V153.9" fill="none" stroke="#3c4868" stroke-width="1.4"/>
<g fill="#3c4868"><rect x="837.2" y="148.2" width="1.8" height="1.8"/><rect x="841.1" y="148.2" width="1.8" height="1.8"/><rect x="845" y="148.2" width="1.8" height="1.8"/></g>
<g transform="translate(715.2 478.8)"><path d="M0 5 a5 5 0 0 1 5 -5 h12.5 q2.5 0 3.7 1.7 q1.2 1.6 3.3 1.6 h22 a5 5 0 0 1 5 5 v38.7 a5 5 0 0 1 -5 5 h-41.5 a5 5 0 0 1 -5 -5 Z" fill="#0a9c8c"/><path d="M6 8 L25.6 16.4 L45.7 8 V39 L25.6 47.6 L6 39 Z" fill="#fff"/><path d="M25.6 16.4 V42" stroke="#0a9c8c" stroke-width="1.5" fill="none"/><path d="M9.8 35.3 L25.6 42.3 L41.8 35.3" stroke="#0a9c8c" stroke-width="1.6" fill="none"/><g fill="#0a9c8c"><circle cx="35.2" cy="17.8" r="2.3"/><circle cx="35.2" cy="25.5" r="2.3"/><circle cx="35.2" cy="33.3" r="2.3"/></g></g>
<g transform="translate(715.2 599.8)"><path d="M0 5 a5 5 0 0 1 5 -5 h12.5 q2.5 0 3.7 1.7 q1.2 1.6 3.3 1.6 h22 a5 5 0 0 1 5 5 v38.7 a5 5 0 0 1 -5 5 h-41.5 a5 5 0 0 1 -5 -5 Z" fill="#0a9c8c"/><path d="M6 8 L25.6 16.4 L45.7 8 V39 L25.6 47.6 L6 39 Z" fill="#fff"/><path d="M25.6 16.4 V42" stroke="#0a9c8c" stroke-width="1.5" fill="none"/><path d="M9.8 35.3 L25.6 42.3 L41.8 35.3" stroke="#0a9c8c" stroke-width="1.6" fill="none"/><g fill="#0a9c8c"><circle cx="35.2" cy="17.8" r="2.3"/><circle cx="35.2" cy="25.5" r="2.3"/><circle cx="35.2" cy="33.3" r="2.3"/></g></g>
<path d="M772.9 497.4 h7.2 l3.2 7.6 l-3.2 7.6 h-7.2 Z" fill="#c0dc6a" stroke="#a5c24e" stroke-width="0.8"/>
<path d="M772.9 618.3 h7.2 l3.2 7.6 l-3.2 7.6 h-7.2 Z" fill="#c0dc6a" stroke="#a5c24e" stroke-width="0.8"/>
<path d="M979.2 566.4 h7.2 l3.2 7.6 l-3.2 7.6 h-7.2 Z" fill="#c0dc6a" stroke="#a5c24e" stroke-width="0.8"/>
<path d="M906.8 549.6 h15 v15.2 h-15 l3.6 -7.6 Z" fill="#c0dc6a" stroke="#a5c24e" stroke-width="0.8"/>
<path d="M906.8 583.8 h15 v15.2 h-15 l3.6 -7.6 Z" fill="#c0dc6a" stroke="#a5c24e" stroke-width="0.8"/>
<path d="M783.3 505.5 L822 505.8 C838 506.2 845.8 509 845.8 522 L845.8 541 C845.8 553 853 557.3 872 557.3 L910.7 557.4" fill="none" stroke="#1f9a3e" stroke-width="1.3"/>
<path d="M783.3 626.5 L826 626 C840 625.5 845.8 622 845.8 612 L845.8 604 C845.8 595 852 591.9 868 591.6 L910.7 591.3" fill="none" stroke="#1f9a3e" stroke-width="1.3"/>
<path d="M907.5 555 L911.2 557.6 L907.5 560.2 Z" fill="#1f9a3e"/><path d="M907.5 589 L911.2 591.6 L907.5 594.2 Z" fill="#1f9a3e"/>
<rect x="923.6" y="547.8" width="52.4" height="52.5" rx="6" fill="#634792"/>
<path fill-rule="evenodd" fill="#fff" d="M955.48 565.05 L959.30 565.02 L959.30 568.58 L955.48 568.55 L954.71 571.43 L958.04 573.31 L956.25 576.39 L952.96 574.45 L950.85 576.56 L952.79 579.85 L949.71 581.64 L947.83 578.31 L944.95 579.08 L944.98 582.90 L941.42 582.90 L941.45 579.08 L938.57 578.31 L936.69 581.64 L933.61 579.85 L935.55 576.56 L933.44 574.45 L930.15 576.39 L928.36 573.31 L931.69 571.43 L930.92 568.55 L927.10 568.58 L927.10 565.02 L930.92 565.05 L931.69 562.17 L928.36 560.29 L930.15 557.21 L933.44 559.15 L935.55 557.04 L933.61 553.75 L936.69 551.96 L938.57 555.29 L941.45 554.52 L941.42 550.70 L944.98 550.70 L944.95 554.52 L947.83 555.29 L949.71 551.96 L952.79 553.75 L950.85 557.04 L952.96 559.15 L956.25 557.21 L958.04 560.29 L954.71 562.17 Z M933.90 566.80 a9.30 9.30 0 1 0 18.60 0 a9.30 9.30 0 1 0 -18.60 0 Z"/>
<circle cx="962.2" cy="585.6" r="13.3" fill="#634792"/>
<path fill-rule="evenodd" fill="#fff" d="M971.53 586.78 L974.05 587.46 L973.40 589.92 L970.87 589.24 L969.69 591.28 L971.54 593.14 L969.74 594.94 L967.88 593.09 L965.84 594.27 L966.52 596.80 L964.06 597.45 L963.38 594.93 L961.02 594.93 L960.34 597.45 L957.88 596.80 L958.56 594.27 L956.52 593.09 L954.66 594.94 L952.86 593.14 L954.71 591.28 L953.53 589.24 L951.00 589.92 L950.35 587.46 L952.87 586.78 L952.87 584.42 L950.35 583.74 L951.00 581.28 L953.53 581.96 L954.71 579.92 L952.86 578.06 L954.66 576.26 L956.52 578.11 L958.56 576.93 L957.88 574.40 L960.34 573.75 L961.02 576.27 L963.38 576.27 L964.06 573.75 L966.52 574.40 L965.84 576.93 L967.88 578.11 L969.74 576.26 L971.54 578.06 L969.69 579.92 L970.87 581.96 L973.40 581.28 L974.05 583.74 L971.53 584.42 Z M954.80 585.60 a7.40 7.40 0 1 0 14.80 0 a7.40 7.40 0 1 0 -14.80 0 Z"/>
<path d="M962.2 580.4 V590.8 M957 585.6 H967.4" stroke="#fff" stroke-width="2.5" fill="none"/>
<rect x="906.9" y="532" width="85.4" height="85.2" fill="none" stroke="#1e88e5" stroke-width="1.4" stroke-dasharray="4.2 2"/></svg><div class="t" style="left:913.8px;top:553px;font-size:9.2px;color:#2a2a4a;-webkit-text-stroke:0.3px #2a2a4a;">T</div><div class="t" style="left:913.5px;top:587px;font-size:9.2px;color:#2a2a4a;-webkit-text-stroke:0.3px #2a2a4a;">S</div><svg width="1139" height="798" viewBox="0 0 1139 798"><rect x="122.3" y="708.8" width="270.6" height="20.7" fill="none" stroke="#e41c1c" stroke-width="4.2"/><path d="M1.2 595.2 L104 696.5" stroke="#e41c1c" stroke-width="3.4" fill="none"/><path d="M114.2 706.4 L93 699.4 L106.8 686 Z" fill="#e41c1c"/></svg></body></html>
